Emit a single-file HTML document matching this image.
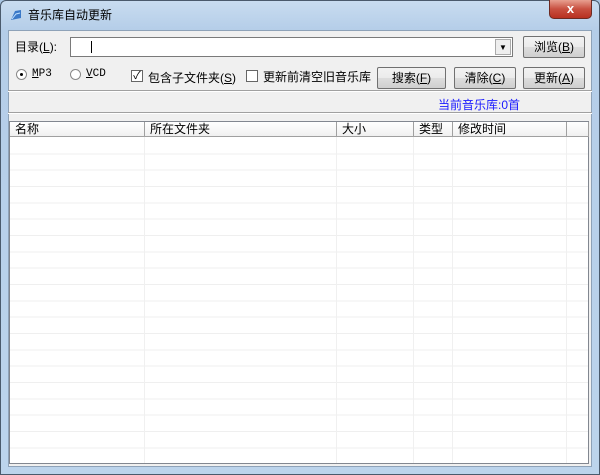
<!DOCTYPE html><html><head><meta charset="utf-8"><style>
*{margin:0;padding:0;box-sizing:border-box}
body{width:600px;height:475px;overflow:hidden;background:#a9c6e4;font:12px "Liberation Sans","Noto Sans CJK SC",sans-serif;position:relative;color:#000}
.frame{position:absolute;left:0;top:0;width:600px;height:475px;border:1px solid #4a5a6c;border-radius:6px 6px 0 0;background:linear-gradient(#c8dcf0,#b4cde8 30px,#bcd4ec)}
.a{position:absolute}
.client{left:8px;top:30px;width:584px;height:437px;background:#f0f0f0;border:1px solid #8ea2b8}
.btn{position:absolute;height:22px;border:1px solid #707070;border-radius:2px;background:linear-gradient(#f2f2f2,#ebebeb 50%,#dddddd 51%,#cfcfcf);text-align:center;line-height:20px;font-size:12px}
.list{left:9px;top:121px;width:580px;height:343px;background:#fff;border:1px solid #828790}
.hd{position:absolute;top:0;height:15px;border-right:1px solid #a0a0a0;border-bottom:1px solid #a0a0a0;background:linear-gradient(#fff,#f0f0f0);padding-left:5px;line-height:14px;font-size:12px}
.vl{position:absolute;top:15px;bottom:0;width:1px;background:#f0f0f0}
</style></head><body>
<div class="frame"></div>
<div class="a" style="left:9px;top:8px;width:14px;height:14px"><svg width="14" height="14"><path d="M2 12 L6 3 L12 2 L12 10 Z" fill="#3a78c8"/><path d="M3 11 L7 6 L11 5" stroke="#bfe0ff" fill="none"/></svg></div>
<div class="a" style="left:28px;top:6px;font-size:12px">音乐库自动更新</div>
<div class="a" style="left:549px;top:0;width:43px;height:19px;border:1px solid #6d2a22;border-top:none;border-radius:0 0 5px 5px;background:linear-gradient(#e8a090,#c85040 50%,#b83020);color:#fff;text-align:center;font-weight:bold;font-size:13px;line-height:18px">x</div>
<div class="a client"></div>
<div class="a" style="left:15px;top:38px">目录(<u>L</u>):</div>
<div class="a" style="left:70px;top:37px;width:443px;height:20px;background:#fff;border:1px solid #7a7a7a"></div>
<div class="a" style="left:91px;top:41px;width:1px;height:12px;background:#000"></div>
<div class="a" style="left:495px;top:39px;width:16px;height:16px;background:#eee;border:1px solid #aaa;font-size:8px;text-align:center;line-height:15px">▼</div>
<div class="btn" style="left:523px;top:36px;width:62px">浏览(<u>B</u>)</div>
<div class="a" style="left:16px;top:69px;width:11px;height:11px;border:1px solid #888;border-radius:50%;background:#fff"><div style="margin:3px;width:3px;height:3px;background:#000;border-radius:50%"></div></div>
<div class="a" style="left:32px;top:68px;font-family:'Liberation Mono',monospace;font-size:11px"><u>M</u>P3</div>
<div class="a" style="left:70px;top:69px;width:11px;height:11px;border:1px solid #888;border-radius:50%;background:#fff"></div>
<div class="a" style="left:86px;top:68px;font-family:'Liberation Mono',monospace;font-size:11px"><u>V</u>CD</div>
<div class="a" style="left:131px;top:70px;width:12px;height:12px;border:1px solid #666;background:#fff;font-size:11px;line-height:10px;text-align:center">✓</div>
<div class="a" style="left:148px;top:69px">包含子文件夹(<u>S</u>)</div>
<div class="a" style="left:246px;top:70px;width:12px;height:12px;border:1px solid #666;background:#fff"></div>
<div class="a" style="left:263px;top:68px">更新前清空旧音乐库</div>
<div class="btn" style="left:377px;top:67px;width:69px">搜索(<u>F</u>)</div>
<div class="btn" style="left:454px;top:67px;width:62px">清除(<u>C</u>)</div>
<div class="btn" style="left:523px;top:67px;width:62px">更新(<u>A</u>)</div>
<div class="a" style="left:8px;top:90px;width:584px;background:#a0a0a0;border-bottom:1px solid #fff;height:2px"></div>
<div class="a" style="left:438px;top:96px;color:#1a1aff">当前音乐库:0首</div>
<div class="a" style="left:8px;top:112px;width:584px;height:2px;background:#a0a0a0;border-bottom:1px solid #fff"></div>
<div class="a list">
<div style="position:absolute;left:0;right:0;top:16px;bottom:0;background:repeating-linear-gradient(#fff 0,#fff 15.33px,#efefef 15.33px,#efefef 16.33px)"></div>
<div class="hd" style="left:0;width:135px">名称</div>
<div class="hd" style="left:135px;width:192px">所在文件夹</div>
<div class="hd" style="left:327px;width:77px">大小</div>
<div class="hd" style="left:404px;width:39px">类型</div>
<div class="hd" style="left:443px;width:114px">修改时间</div>
<div class="hd" style="left:557px;width:22px"></div>
<div class="vl" style="left:134px"></div><div class="vl" style="left:326px"></div><div class="vl" style="left:403px"></div><div class="vl" style="left:442px"></div><div class="vl" style="left:556px"></div>
</div>
</body></html>
